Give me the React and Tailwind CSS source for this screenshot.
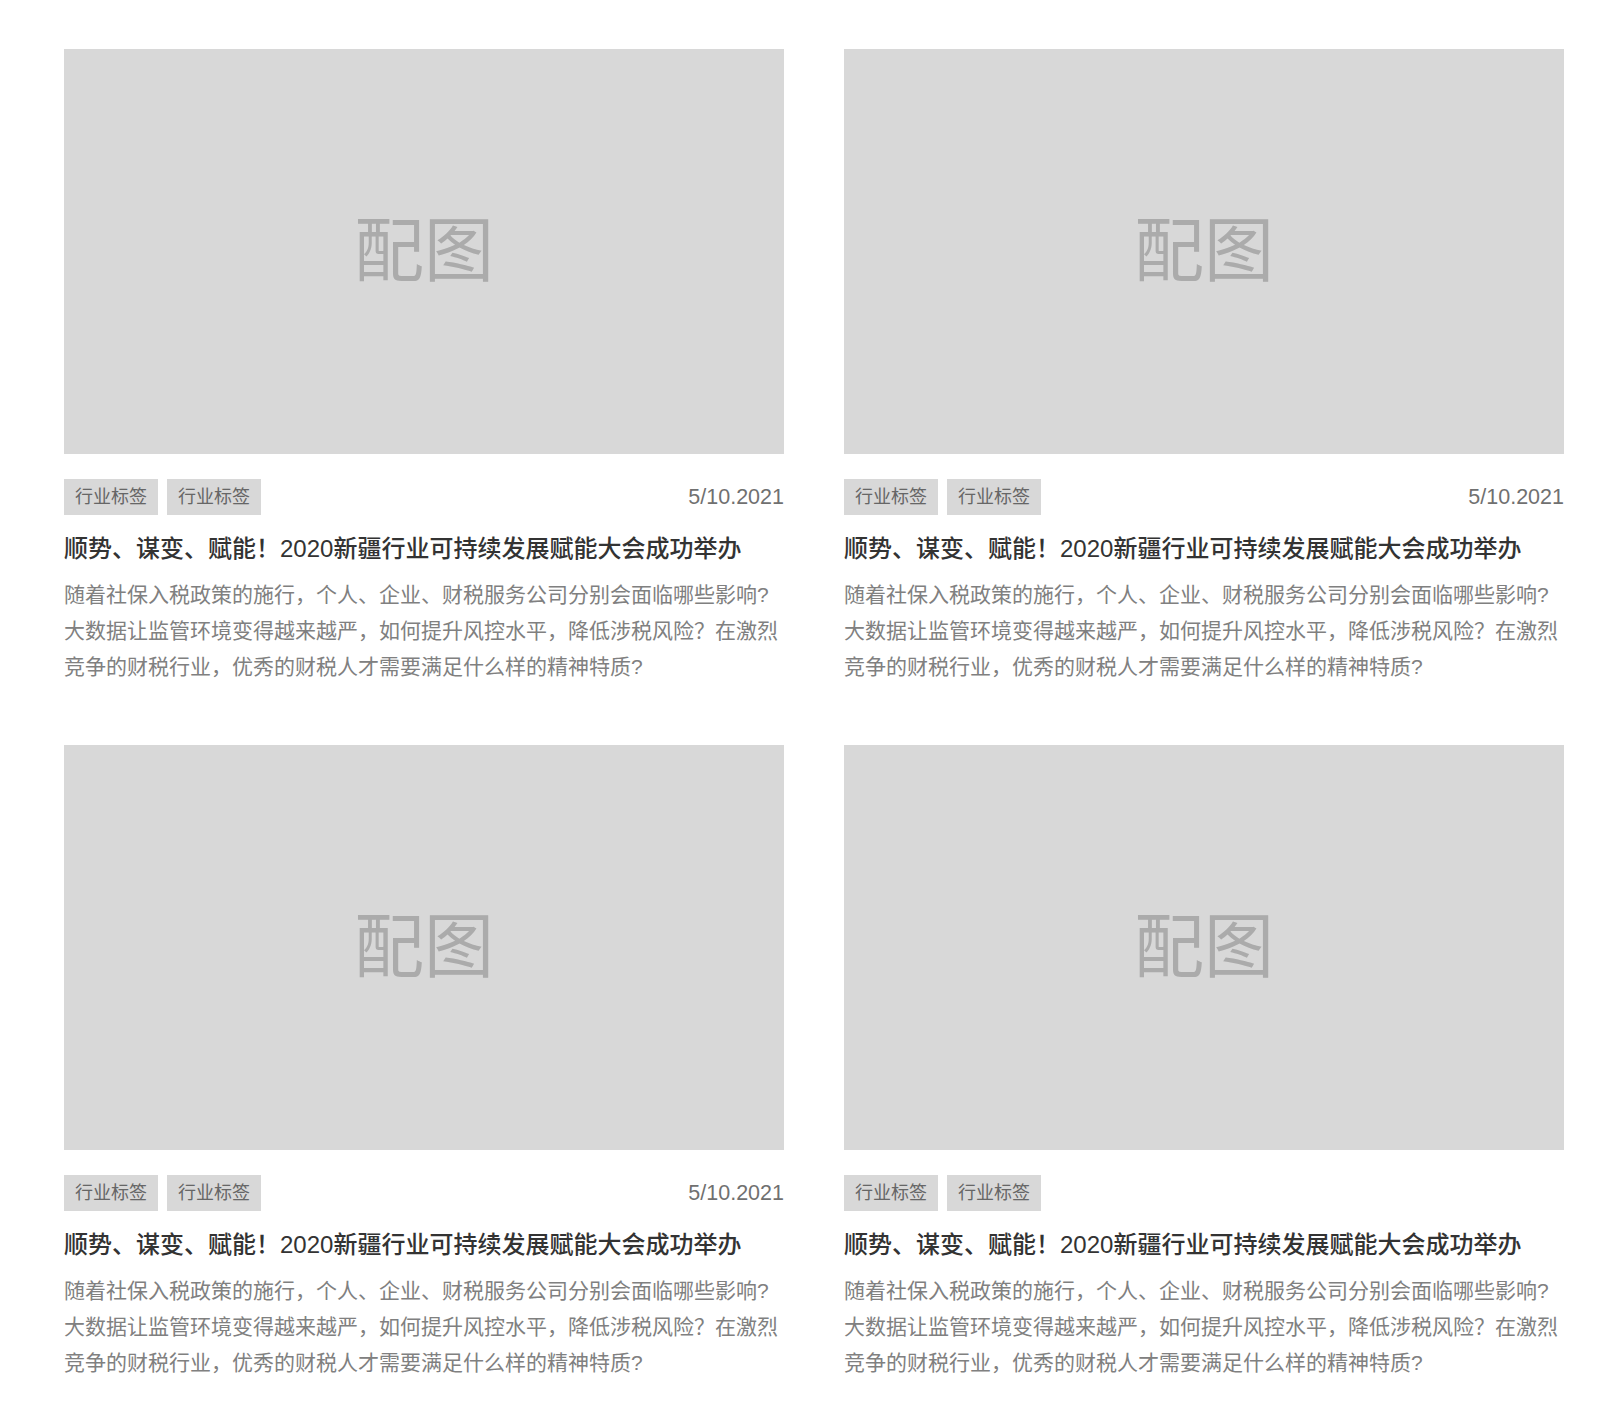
const posts = [
    { id: 1, showDate: true },
    { id: 2, showDate: true },
    { id: 3, showDate: true },
    { id: 4, showDate: false },
]

const font = { fontFamily: '"Liberation Sans", "Noto Sans CJK SC", sans-serif' }

function PostCard({ post }) {
    return (
        <div className="flex flex-col">
            <div className="w-[720px] h-[405px] bg-[#d8d8d8] flex items-center justify-center">
                <span className="text-[70px] leading-none text-[#ababab]">配图</span>
            </div>

            <div className="mt-[25px] h-[36px] flex items-center justify-between">
                <div className="flex gap-[9px]">
                    <span className="h-[36px] px-[11px] bg-[#d8d8d8] text-[18px] leading-[36px] text-[#666]">行业标签</span>
                    <span className="h-[36px] px-[11px] bg-[#d8d8d8] text-[18px] leading-[36px] text-[#666]">行业标签</span>
                </div>
                {post.showDate && <span className="text-[21.5px] text-[#707070]">5/10.2021</span>}
            </div>

            <h3 className="mt-[16px] text-[24px] leading-[36px] font-medium text-[#333]">
                顺势、谋变、赋能！2020新疆行业可持续发展赋能大会成功举办
            </h3>
            <p className="mt-[10px] text-[21px] leading-[36px] text-[#808080]">
                随着社保入税政策的施行，个人、企业、财税服务公司分别会面临哪些影响?大数据让监管环境变得越来越严，如何提升风控水平，降低涉税风险？在激烈竞争的财税行业，优秀的财税人才需要满足什么样的精神特质?
            </p>
        </div>
    )
}

export default function App() {
    return (
        <div className="min-h-[1422px] bg-white pt-[49px] pl-[64px]" style={font}>
            <div className="grid grid-cols-[720px_720px] gap-x-[60px] gap-y-[60px]">
                {posts.map(p => <PostCard key={p.id} post={p} />)}
            </div>
        </div>
    )
}
